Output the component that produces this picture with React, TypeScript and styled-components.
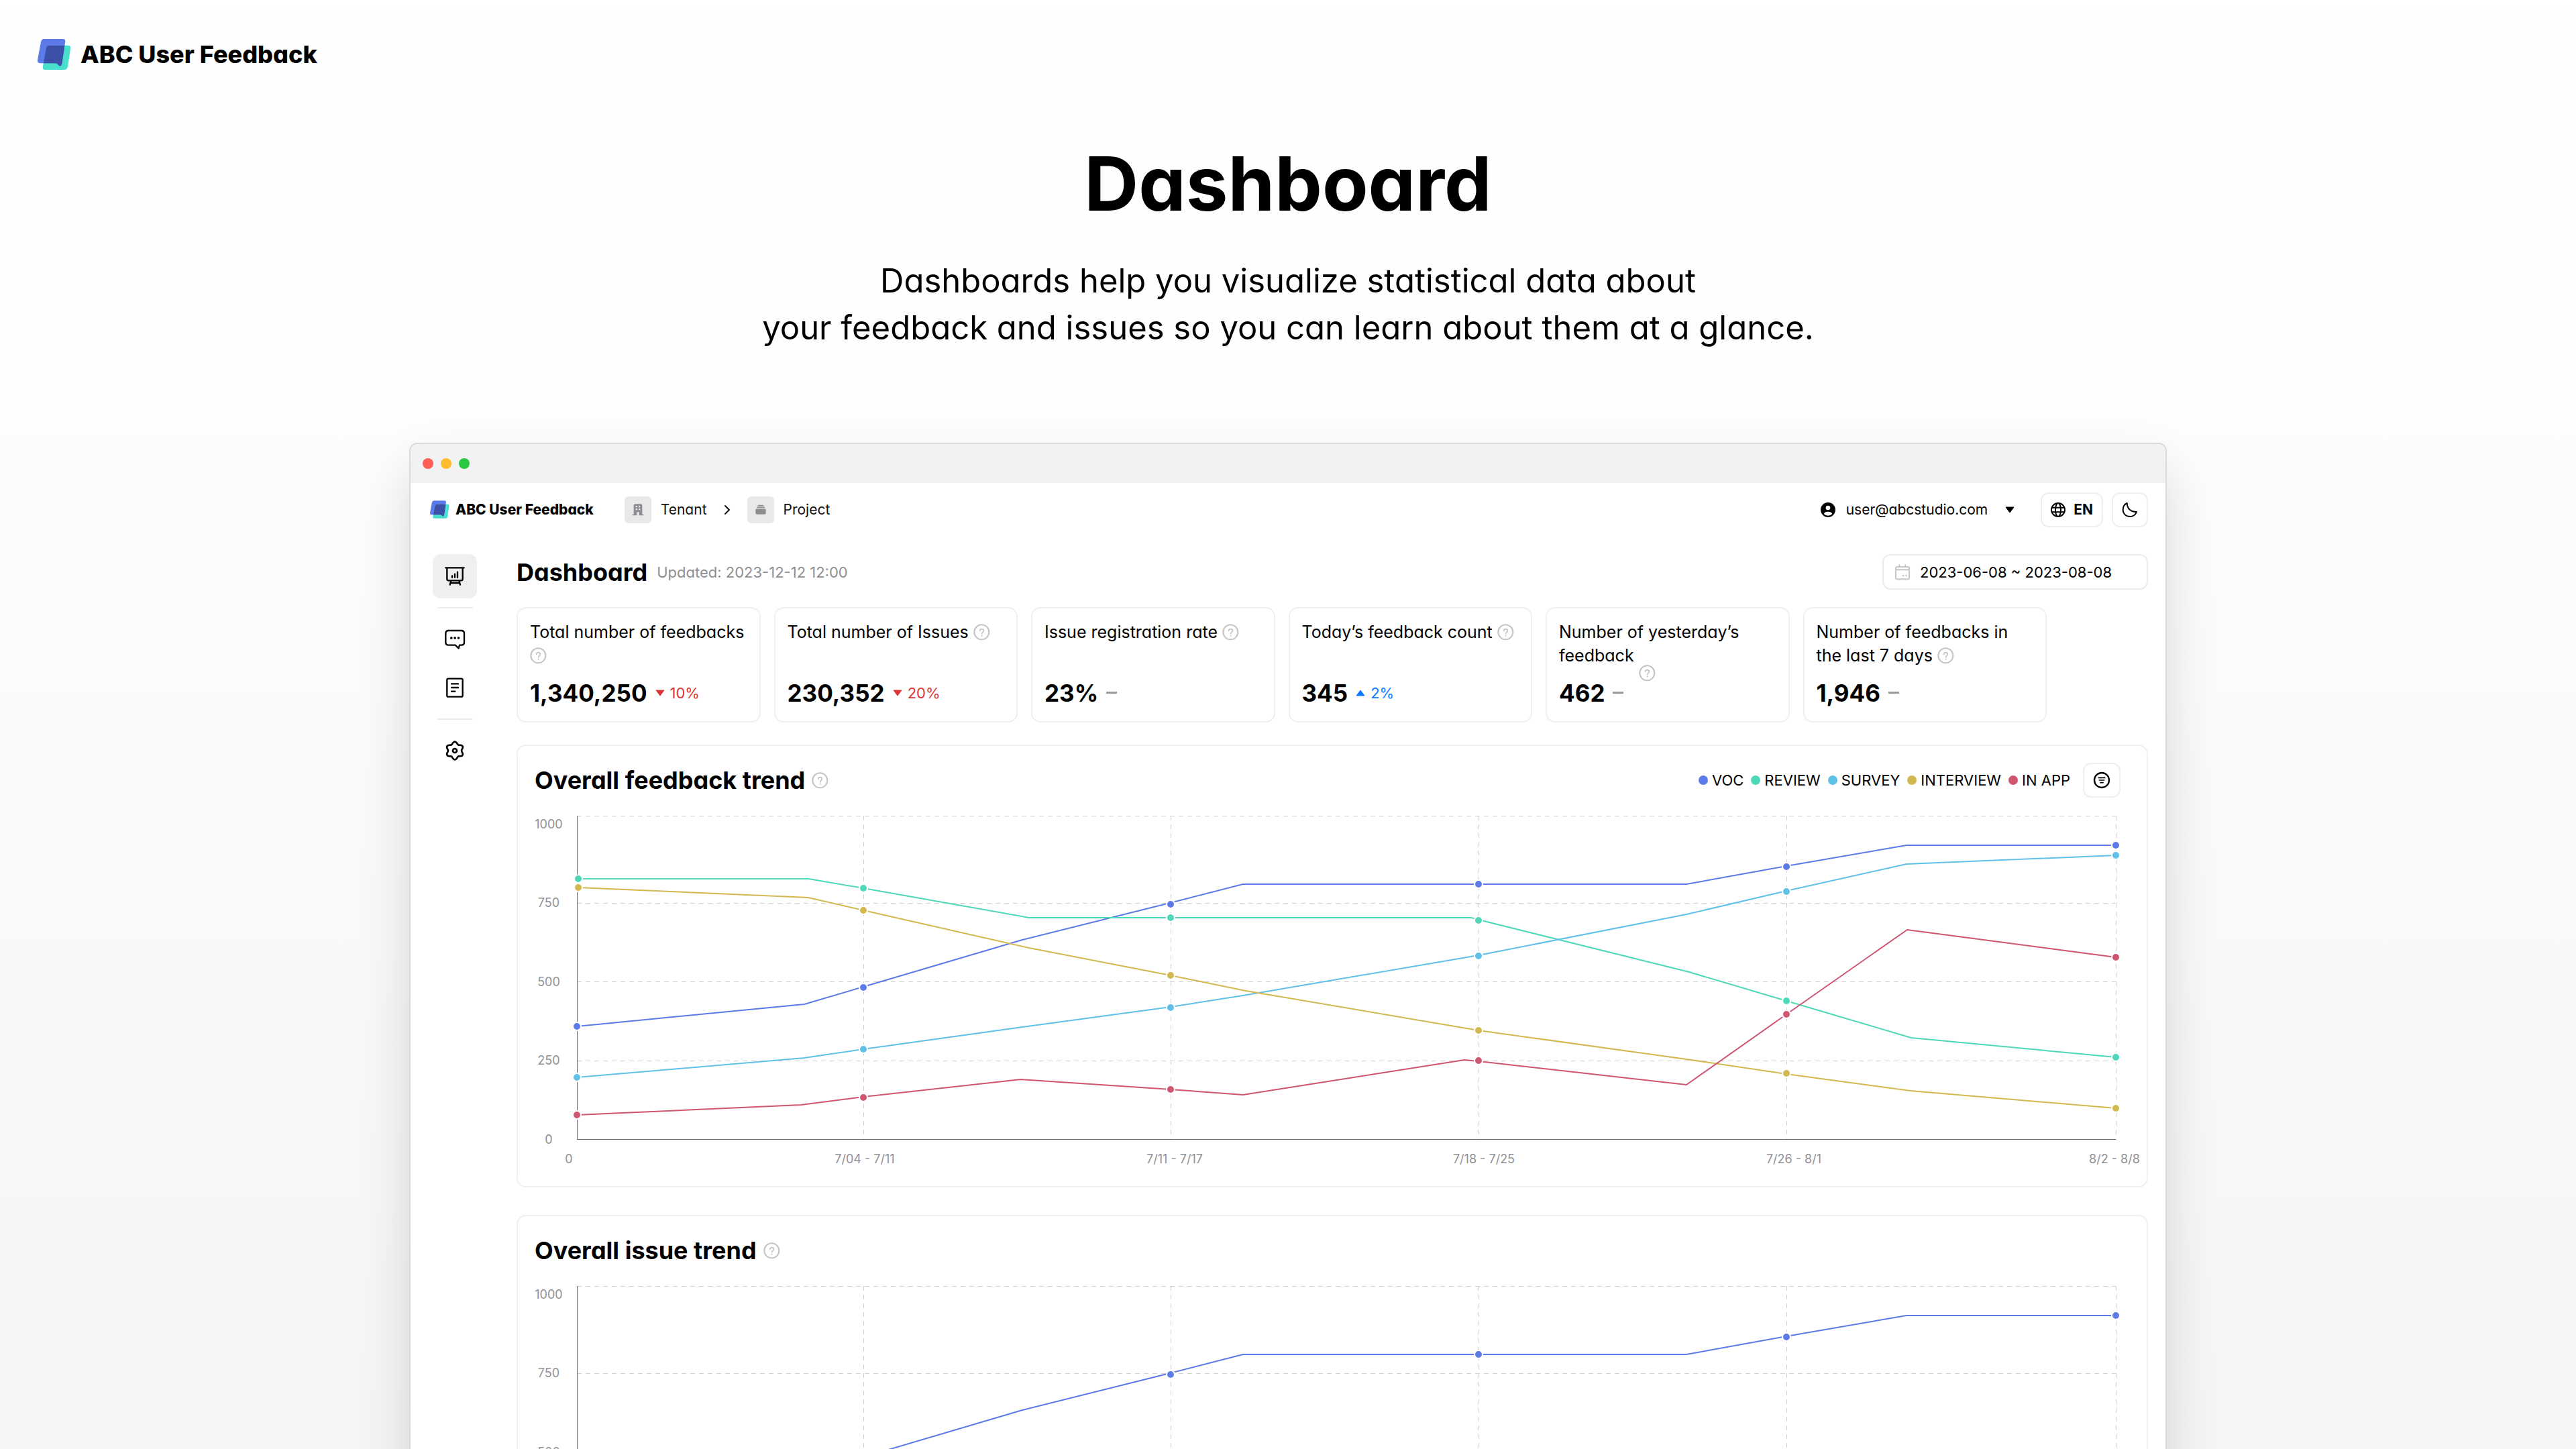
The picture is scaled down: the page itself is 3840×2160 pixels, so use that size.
import React from "react";
import styled, { createGlobalStyle } from "styled-components";

const GlobalStyle = createGlobalStyle`
  * { box-sizing: border-box; }
  body {
    margin: 0;
    color: #000;
    font-family: Inter, "Noto Sans", sans-serif;
    font-feature-settings: "cv11" 1;
  }
  button, input { font: inherit; font-feature-settings: inherit; color: inherit; }
  svg { display: block; flex: none; }
  h1, h2, p, dl, dt, dd, ul { margin: 0; padding: 0; }
`;

/* ---------- page ---------- */

const Page = styled.div`
  height: 100vh;
  overflow: hidden;
  display: flex;
  flex-direction: column;
  background: linear-gradient(180deg, #ffffff 0%, #fdfdfd 30%, #f5f5f5 100%);
`;

const TopBar = styled.header`
  flex: none;
  display: flex;
  padding: 56px 56px 0;
`;

const Brand = styled.a<{ $large?: boolean }>`
  display: flex;
  align-items: center;
  gap: ${(p) => (p.$large ? 14 : 9)}px;
  color: #000;
  text-decoration: none;
  font-weight: 800;
  font-size: ${(p) => (p.$large ? 36 : 21)}px;
  line-height: ${(p) => (p.$large ? 50 : 28)}px;
  white-space: nowrap;
`;

const Hero = styled.section`
  flex: none;
  padding-top: 97px;
  text-align: center;
`;

const HeroTitle = styled.h1`
  font-size: 112px;
  line-height: 140px;
  font-weight: 700;
`;

const HeroText = styled.p`
  margin-top: 41px;
  font-size: 49px;
  line-height: 70px;
  font-weight: 400;
`;

/* ---------- browser window ---------- */

const Browser = styled.section`
  flex: none;
  width: calc(100% - 80px);
  max-width: 2620px;
  margin: 136px auto 0;
  background: #fff;
  border: 2px solid #dadada;
  border-radius: 12px;
  box-shadow: 0 40px 80px rgba(0, 0, 0, 0.14);
`;

const TitleBar = styled.div`
  display: flex;
  align-items: center;
  gap: 11px;
  height: 58px;
  padding: 0 18px;
  background: #f2f2f2;
  border-radius: 10px 10px 0 0;
`;

const Light = styled.span<{ $color: string }>`
  width: 16px;
  height: 16px;
  border-radius: 50%;
  background: ${(p) => p.$color};
`;

const AppHeader = styled.header`
  display: flex;
  align-items: center;
  height: 79px;
  padding: 0 26px 0 29px;
`;

const Crumbs = styled.nav`
  display: flex;
  align-items: center;
  gap: 22px;
  margin-left: 46px;
`;

const Crumb = styled.a`
  display: flex;
  align-items: center;
  gap: 14px;
  color: #111;
  text-decoration: none;
  font-size: 21px;
  line-height: 28px;
`;

const CrumbIcon = styled.span`
  display: grid;
  place-items: center;
  width: 40px;
  height: 40px;
  border-radius: 6px;
  background: #e9e9e9;
`;

const HeaderActions = styled.div`
  display: flex;
  align-items: center;
  gap: 13px;
  margin-left: auto;
`;

const AccountButton = styled.button`
  display: flex;
  align-items: center;
  gap: 16px;
  padding: 0;
  margin-right: 26px;
  border: 0;
  background: none;
  font-size: 21px;
  line-height: 28px;

  svg:last-child { margin-left: 10px; }
`;

const OutlineButton = styled.button`
  display: flex;
  align-items: center;
  justify-content: center;
  gap: 12px;
  min-width: 52px;
  height: 52px;
  padding: 0 13px;
  border: 2px solid #efefef;
  border-radius: 12px;
  background: #fff;
  font-size: 21px;
  line-height: 28px;
  font-weight: 700;
`;

const AppBody = styled.div`
  display: flex;
  gap: 59px;
  padding: 27px 26px 60px 33px;
`;

const SideNav = styled.nav`
  flex: none;
  display: flex;
  flex-direction: column;
  align-items: center;
  width: 66px;
`;

const SideGroup = styled.div`
  display: flex;
  flex-direction: column;
  gap: 6px;

  & + & {
    margin-top: 13px;
    padding-top: 15px;
    background: linear-gradient(#ededed, #ededed) center top / 53px 2px no-repeat;
  }
`;

const SideLink = styled.a<{ $active?: boolean }>`
  display: grid;
  place-items: center;
  width: 66px;
  height: 66px;
  border-radius: 12px;
  background: ${(p) => (p.$active ? "#efefef" : "transparent")};
`;

const Main = styled.main`
  flex: 1;
  min-width: 0;
  display: flex;
  flex-direction: column;
`;

const TitleRow = styled.div`
  display: flex;
  align-items: center;
  min-height: 53px;
`;

const SectionTitle = styled.h2`
  font-size: 36px;
  line-height: 44px;
  font-weight: 700;
`;

const Updated = styled.span`
  margin-left: 14px;
  font-size: 22px;
  line-height: 28px;
  color: #8f8f93;
`;

const DateField = styled.label`
  display: flex;
  align-items: center;
  gap: 14px;
  width: 396px;
  height: 53px;
  margin-left: auto;
  padding: 0 16px;
  border: 2px solid #ebebeb;
  border-radius: 12px;

  input {
    flex: 1;
    min-width: 0;
    padding: 0;
    border: 0;
    outline: 0;
    background: none;
    font-size: 22px;
    line-height: 28px;
  }
`;

/* ---------- cards ---------- */

const Cards = styled.dl`
  display: grid;
  grid-template-columns: repeat(6, 1fr);
  gap: 20px;
  max-width: 2281px;
  margin-top: 26px;
`;

const Card = styled.div`
  display: flex;
  flex-direction: column;
  justify-content: space-between;
  min-height: 172px;
  padding: 18px 12px 20px 18px;
  border: 2px solid #f0f0f0;
  border-radius: 14px;
`;

const CardLabel = styled.dt`
  font-size: 25px;
  line-height: 35px;
`;

const CardValue = styled.dd`
  display: flex;
  align-items: center;
  gap: 12px;
  font-size: 35px;
  line-height: 44px;
  font-weight: 700;
`;

const Delta = styled.span<{ $color: string }>`
  display: flex;
  align-items: center;
  gap: 8px;
  color: ${(p) => p.$color};
  font-size: 22px;
  line-height: 28px;
  font-weight: 400;
`;

const HelpSvg = styled.svg<{ $dropped?: boolean; $block?: boolean }>`
  display: ${(p) => (p.$block ? "block" : "inline-block")};
  vertical-align: -4px;
  margin-bottom: ${(p) => (p.$dropped ? -26 : 0)}px;
`;

/* ---------- chart panels ---------- */

const Panel = styled.section`
  margin-top: 33px;
  border: 2px solid #f0f0f0;
  border-radius: 14px;

  & + & { margin-top: 41px; }
`;

const PanelHead = styled.div`
  display: flex;
  align-items: center;
  gap: 10px;
  min-height: 77px;
  padding: 25px 39px 0 25px;
`;

const Legend = styled.ul`
  display: flex;
  gap: 11px;
  margin-left: auto;
  margin-right: 9px;
  list-style: none;
`;

const LegendItem = styled.li<{ $color: string }>`
  display: flex;
  align-items: center;
  gap: 6px;
  font-size: 22px;
  line-height: 28px;

  &::before {
    content: "";
    width: 14px;
    height: 14px;
    border-radius: 50%;
    background: ${(p) => p.$color};
  }
`;

const ChartSvg = styled.svg`
  width: 100%;
  height: auto;
`;

const AxisText = styled.text`
  font-size: 18px;
  fill: #919195;
  text-anchor: middle;
  dominant-baseline: central;
`;

/* ---------- icons ---------- */

function Logo({ size }: { size: number }) {
  const id = `logo-${size}`;
  const teal =
    "M18 10H46Q51 10 50 15L46 42Q45 47 40 47H12Q7 47 8 42L13 15Q14 10 18 10Z";
  const blue =
    "M10 0H38Q43 0 42 5L37 38Q36 42 33 41L30 38Q29 37 27 37H4Q-1 37 0 32L5 5Q6 0 10 0Z";
  return (
    <svg width={size} height={size} viewBox="0 -2 51 51" aria-hidden="true">
      <clipPath id={id}>
        <path d={teal} />
      </clipPath>
      <path d={teal} fill="#48e0cd" />
      <path d={blue} fill="#5c7be8" />
      <path d={blue} fill="#3d50a7" clipPath={`url(#${id})`} />
    </svg>
  );
}

function Help({ dropped, block }: { dropped?: boolean; block?: boolean }) {
  return (
    <HelpSvg $dropped={dropped} $block={block} width="25" height="25" viewBox="0 0 75 75" fill="none" stroke="#c4c4c4" role="img" aria-label="Help">
      <circle cx="37" cy="37" r="33" strokeWidth="6" />
      <path d="M29 31Q29 23 37 23Q46 23 46 30Q46 35 41 38Q38 40 38 45" strokeWidth="5" strokeLinecap="round" />
      <circle cx="38" cy="53" r="3" fill="#c4c4c4" stroke="none" />
    </HelpSvg>
  );
}

const lineIcon = {
  width: 32,
  height: 32,
  viewBox: "0 0 96 96",
  fill: "none",
  stroke: "#000",
  strokeWidth: 7,
  strokeLinecap: "round" as const,
  strokeLinejoin: "round" as const,
};

const BoardIcon = () => (
  <svg {...lineIcon}>
    <path d="M7 10H89M13 10V60Q13 67 20 67H76Q83 67 83 60V10M36 46V53M48 38V53M60 29V53M31 68L26 86M67 68L72 86M29 78H69" />
  </svg>
);

const ChatIcon = () => (
  <svg {...lineIcon}>
    <path d="M20 9H77Q90 9 90 22V61Q90 74 77 74H69L65 88L50 74H20Q7 74 7 61V22Q7 9 20 9Z" />
    <path d="M32 42H33M48 42H49M64 42H65" strokeWidth={10} />
  </svg>
);

const DocIcon = () => (
  <svg {...lineIcon}>
    <rect x="13" y="8" width="70" height="81" rx="6" />
    <path d="M33 31H63M33 48H63M33 65H49" />
  </svg>
);

const gearPath =
  Array.from({ length: 72 }, (_, i) => {
    const a = (i * Math.PI) / 36;
    const r = 35 + 5 * Math.cos(6 * (a - Math.PI / 2));
    return `${i ? "L" : "M"}${(48 + r * Math.cos(a)).toFixed(1)} ${(48 + r * Math.sin(a)).toFixed(1)}`;
  }).join("") + "Z";

const GearIcon = () => (
  <svg {...lineIcon} strokeWidth={8}>
    <path d={gearPath} />
    <circle cx="48" cy="48" r="9" />
  </svg>
);

const BuildingIcon = () => (
  <svg width="20" height="20" viewBox="0 0 60 60">
    <path d="M11 10Q11 4 17 4H43Q49 4 49 10V50H55V55H35V40H25V55H5V50H11Z" fill="#8d8d92" />
    <path d="M20 13H27V19H20ZM33 13H40V19H33ZM20 25H27V31H20ZM33 25H40V31H33Z" fill="#f4f4f4" />
  </svg>
);

const StackIcon = () => (
  <svg width="20" height="20" viewBox="0 0 60 60" fill="#8d8d92">
    <rect x="18" y="8" width="24" height="5" rx="2" />
    <rect x="12" y="16" width="36" height="5" rx="2" />
    <rect x="7" y="25" width="46" height="25" rx="6" />
  </svg>
);

const ChevronIcon = () => (
  <svg width="16" height="16" viewBox="0 0 16 16" fill="none" stroke="#111" strokeWidth="2" strokeLinecap="round" strokeLinejoin="round">
    <path d="M5 2L11 8L5 14" />
  </svg>
);

const UserIcon = () => (
  <svg width="22" height="22" viewBox="0 0 66 66">
    <circle cx="33" cy="33" r="33" />
    <circle cx="33" cy="24" r="10" fill="#fff" />
    <path d="M14 51Q18 41 33 41Q48 41 52 51Q44 59 33 59Q22 59 14 51Z" fill="#fff" />
  </svg>
);

const Caret = ({ up, color = "#000" }: { up?: boolean; color?: string }) => (
  <svg width="14" height="10" viewBox="0 0 14 10" fill={color} stroke={color} strokeWidth="1" strokeLinejoin="round">
    <path d={up ? "M1 9H13L7 1Z" : "M1 1H13L7 9Z"} />
  </svg>
);

const GlobeIcon = () => (
  <svg width="22" height="22" viewBox="0 0 66 66" fill="none" stroke="#000" strokeWidth="6">
    <circle cx="33" cy="33" r="30" />
    <ellipse cx="33" cy="33" rx="12" ry="30" />
    <path d="M6 23H60M6 43H60" />
  </svg>
);

const MoonIcon = () => (
  <svg width="24" height="24" viewBox="0 0 72 72" fill="none" stroke="#000" strokeWidth="6" strokeLinejoin="round">
    <path d="M23 6C24 32 42 47 66 45C61 58 50 66 36 66C18 66 5 53 5 36C5 22 12 11 23 6Z" />
  </svg>
);

const CalendarIcon = () => (
  <svg width="24" height="24" viewBox="0 0 72 72" fill="none" stroke="#c6c6c8" strokeWidth="6" strokeLinecap="round">
    <rect x="6" y="12" width="60" height="55" rx="6" />
    <path d="M6 25H66M22 4V12M49 4V12" />
    <path d="M39 51H40M52 51H53" strokeWidth="7" />
  </svg>
);

const FilterIcon = () => (
  <svg width="26" height="26" viewBox="0 0 78 78" fill="none" stroke="#000">
    <circle cx="39" cy="39" r="33" strokeWidth="7" />
    <path d="M23 28H55M26 39H52M31 50H47" strokeWidth="5" />
  </svg>
);

/* ---------- data ---------- */

type Point = [x: number, y: number];
type Series = { name: string; color: string; line: Point[]; dots: Point[] };

/* x runs right from the value axis, y runs up from the base line */
const series: Series[] = [
  {
    name: "VOC",
    color: "#5c7be8",
    line: [[0, 168], [339, 201], [427, 227], [664, 297], [884, 352], [993, 380], [1654, 380], [1803, 407], [1982, 438], [2294, 438]],
    dots: [[0, 168], [427, 226], [885, 350], [1344, 380], [1803, 406], [2294, 438]],
  },
  {
    name: "REVIEW",
    color: "#4dd8b8",
    line: [[2, 388], [345, 388], [427, 374], [674, 330], [1333, 330], [1344, 327], [1658, 249], [1803, 206], [1989, 151], [2294, 122]],
    dots: [[2, 388], [427, 374], [885, 330], [1344, 326], [1803, 206], [2294, 122]],
  },
  {
    name: "SURVEY",
    color: "#5fc0e8",
    line: [[0, 92], [339, 121], [427, 134], [664, 167], [885, 197], [993, 214], [1344, 274], [1654, 335], [1803, 370], [1982, 410], [2294, 423]],
    dots: [[0, 92], [427, 134], [885, 196], [1344, 273], [1803, 369], [2294, 423]],
  },
  {
    name: "INTERVIEW",
    color: "#d3b850",
    line: [[2, 375], [345, 360], [427, 341], [674, 285], [885, 244], [997, 221], [1344, 162], [1654, 119], [1803, 97], [1988, 72], [2294, 46]],
    dots: [[2, 375], [427, 341], [885, 244], [1344, 162], [1803, 98], [2294, 46]],
  },
  {
    name: "IN APP",
    color: "#d0556f",
    line: [[0, 36], [334, 51], [427, 63], [662, 89], [885, 74], [993, 66], [1323, 118], [1344, 116], [1654, 81], [1803, 186], [1983, 312], [2294, 271]],
    dots: [[0, 36], [427, 62], [885, 74], [1344, 117], [1803, 186], [2294, 271]],
  },
];

const valueTicks = [1000, 750, 500, 250, 0];
const columns = [427, 885, 1344, 1803, 2294];
const rows = [482, 352, 235, 117];
const dateTicks: [number, string][] = [
  [-12, "0"],
  [429, "7/04 - 7/11"],
  [891, "7/11 - 7/17"],
  [1352, "7/18 - 7/25"],
  [1814, "7/26 - 8/1"],
  [2292, "8/2 - 8/8"],
];

function Chart({ data, label }: { data: Series[]; label: string }) {
  const left = 88;
  const base = 509;
  const at = ([x, y]: Point) => `${left + x},${base - y}`;
  return (
    <ChartSvg viewBox="0 0 2428 579" role="img" aria-label={label}>
      <g stroke="#d0d0d0" strokeWidth="1" strokeDasharray="7 6" shapeRendering="crispEdges">
        {rows.map((y) => (
          <line key={y} x1={left} x2={left + 2294} y1={base - y} y2={base - y} />
        ))}
        {columns.map((x) => (
          <line key={x} x1={left + x} x2={left + x} y1={base - 482} y2={base} />
        ))}
      </g>
      <path d={`M${left} ${base - 482}V${base}H${left + 2294}`} fill="none" stroke="#6a6a6e" strokeWidth="1" shapeRendering="crispEdges" />
      {valueTicks.map((v) => (
        <AxisText key={v} x="46" y={base - Math.round(v * 0.47)}>{v}</AxisText>
      ))}
      {dateTicks.map(([x, text]) => (
        <AxisText key={text} x={left + x} y="538">{text}</AxisText>
      ))}
      {data.map((s) => (
        <polyline key={s.name} points={s.line.map(at).join(" ")} fill="none" stroke={s.color} strokeWidth="2" strokeLinejoin="round" />
      ))}
      {data.map((s) =>
        s.dots.map(([x, y]) => (
          <circle key={s.name + x} cx={left + x} cy={base - y} r="6" fill={s.color} stroke="#fff" strokeWidth="2" />
        ))
      )}
    </ChartSvg>
  );
}

type Metric = { label: string; value: string; change?: string; up?: boolean; dropped?: boolean };

const metrics: Metric[] = [
  { label: "Total number of feedbacks", value: "1,340,250", change: "10%" },
  { label: "Total number of Issues", value: "230,352", change: "20%" },
  { label: "Issue registration rate", value: "23%" },
  { label: "Today’s feedback count", value: "345", change: "2%", up: true },
  { label: "Number of yesterday’s feedback", value: "462", dropped: true },
  { label: "Number of feedbacks in the last 7 days", value: "1,946" },
];

function MetricCard({ label, value, change, up, dropped }: Metric) {
  const color = !change ? "#9a9a9e" : up ? "#0a7cff" : "#dc3535";
  return (
    <Card>
      <CardLabel>
        {label} <Help dropped={dropped} />
      </CardLabel>
      <CardValue>
        {value}
        <Delta $color={color}>
          {change ? (
            <>
              <Caret up={up} color={color} />
              {change}
            </>
          ) : (
            <svg width="16" height="4" viewBox="0 0 16 4" aria-label="No change">
              <rect width="16" height="3" fill={color} />
            </svg>
          )}
        </Delta>
      </CardValue>
    </Card>
  );
}

export default function App() {
  return (
    <>
      <GlobalStyle />
      <Page>
        <TopBar>
          <Brand href="#" $large>
            <Logo size={50} />
            ABC User Feedback
          </Brand>
        </TopBar>
        <Hero>
          <HeroTitle>Dashboard</HeroTitle>
          <HeroText>
            Dashboards help you visualize statistical data about
            <br />
            your feedback and issues so you can learn about them at a glance.
          </HeroText>
        </Hero>

        <Browser>
          <TitleBar>
            <Light $color="#ff5f57" />
            <Light $color="#febc2e" />
            <Light $color="#28c840" />
          </TitleBar>
          <AppHeader>
            <Brand href="#">
              <Logo size={29} />
              ABC User Feedback
            </Brand>
            <Crumbs aria-label="Breadcrumb">
              <Crumb href="#">
                <CrumbIcon><BuildingIcon /></CrumbIcon>
                Tenant
              </Crumb>
              <ChevronIcon />
              <Crumb href="#">
                <CrumbIcon><StackIcon /></CrumbIcon>
                Project
              </Crumb>
            </Crumbs>
            <HeaderActions>
              <AccountButton type="button">
                <UserIcon />
                user@abcstudio.com
                <Caret />
              </AccountButton>
              <OutlineButton type="button">
                <GlobeIcon />
                EN
              </OutlineButton>
              <OutlineButton type="button" aria-label="Dark mode">
                <MoonIcon />
              </OutlineButton>
            </HeaderActions>
          </AppHeader>

          <AppBody>
            <SideNav aria-label="Sections">
              <SideGroup>
                <SideLink href="#" $active aria-label="Dashboard"><BoardIcon /></SideLink>
              </SideGroup>
              <SideGroup>
                <SideLink href="#" aria-label="Feedback"><ChatIcon /></SideLink>
                <SideLink href="#" aria-label="Issues"><DocIcon /></SideLink>
              </SideGroup>
              <SideGroup>
                <SideLink href="#" aria-label="Settings"><GearIcon /></SideLink>
              </SideGroup>
            </SideNav>

            <Main>
              <TitleRow>
                <SectionTitle>Dashboard</SectionTitle>
                <Updated>Updated: 2023-12-12 12:00</Updated>
                <DateField>
                  <CalendarIcon />
                  <input type="text" aria-label="Date range" defaultValue="2023-06-08 ~ 2023-08-08" />
                </DateField>
              </TitleRow>

              <Cards>
                {metrics.map((m) => (
                  <MetricCard key={m.label} {...m} />
                ))}
              </Cards>

              <Panel>
                <PanelHead>
                  <SectionTitle>Overall feedback trend</SectionTitle>
                  <Help block />
                  <Legend>
                    {series.map((s) => (
                      <LegendItem key={s.name} $color={s.color}>{s.name}</LegendItem>
                    ))}
                  </Legend>
                  <OutlineButton type="button" aria-label="Filter series">
                    <FilterIcon />
                  </OutlineButton>
                </PanelHead>
                <Chart data={series} label="Overall feedback trend" />
              </Panel>

              <Panel>
                <PanelHead>
                  <SectionTitle>Overall issue trend</SectionTitle>
                  <Help block />
                </PanelHead>
                <Chart data={series.slice(0, 1)} label="Overall issue trend" />
              </Panel>
            </Main>
          </AppBody>
        </Browser>
      </Page>
    </>
  );
}
